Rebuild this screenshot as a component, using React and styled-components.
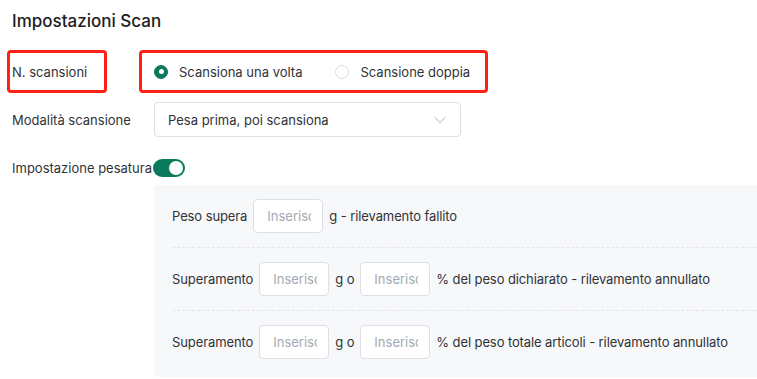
import React from "react";
import styled, { createGlobalStyle } from "styled-components";

const Global = createGlobalStyle`
  html, body { margin: 0; padding: 0; background: #fff; overflow: hidden; }
  body { font-family: Inter, "Noto Sans", sans-serif; font-size: 13px; color: #2b2f36; }
  * { box-sizing: border-box; }
`;

const Page = styled.div`
  width: 757px;
  padding: 9px 0 0 12px;
`;

const Title = styled.h2`
  margin: 0;
  font-size: 17px;
  line-height: 24px;
  font-weight: 500;
  color: #1a1c1f;
`;

const Row = styled.div`
  display: flex;
  align-items: center;
  height: ${(p) => p.$h}px;
  margin-top: ${(p) => p.$mt}px;
`;

const Label = styled.div`
  width: 142px;
  flex: none;
  display: flex;
  align-items: center;
  line-height: 18px;
  color: #2f3338;
`;

const LabelText = styled.span`
  white-space: nowrap;
`;

const Highlight = styled.div`
  display: flex;
  align-items: center;
  height: 43px;
  border: 3px solid #ff2116;
  border-radius: 4px;
  margin-left: ${(p) => p.$ml}px;
  width: ${(p) => p.$w}px;
  padding-left: ${(p) => p.$pl}px;
`;

const RadioGroup = styled.div`
  display: flex;
  align-items: center;
  gap: 33px;
`;

const RadioItem = styled.label`
  display: flex;
  align-items: center;
  gap: 11px;
  color: #2f3338;
  cursor: pointer;
`;

const RadioDot = styled.span`
  width: 14px;
  height: 14px;
  border-radius: 50%;
  flex: none;
  position: relative;
  background: ${(p) => (p.$on ? "#0b7a5c" : "#fff")};
  border: 1px solid ${(p) => (p.$on ? "#0b7a5c" : "#dcdfe5")};
  &::after {
    content: "";
    display: ${(p) => (p.$on ? "block" : "none")};
    position: absolute;
    left: 50%;
    top: 50%;
    width: 5px;
    height: 5px;
    margin: -2.5px 0 0 -2.5px;
    border-radius: 50%;
    background: #fff;
  }
`;

const Select = styled.div`
  width: 307px;
  height: 35px;
  border: 1px solid #dcdfe5;
  border-radius: 4px;
  display: flex;
  align-items: center;
  justify-content: space-between;
  padding: 0 14px 0 13px;
  color: #2f3338;
`;

const Toggle = styled.span`
  width: 32px;
  height: 18px;
  border-radius: 9px;
  background: #0b7a5c;
  flex: none;
  display: flex;
  align-items: center;
  justify-content: flex-end;
  padding: 2px;
  margin-left: -1px;
`;

const Knob = styled.span`
  width: 14px;
  height: 14px;
  border-radius: 50%;
  background: #fff;
`;

const Panel = styled.div`
  margin: 8px 0 0 142px;
  width: 620px;
  background: #f7f8fa;
  border-radius: 4px;
  padding: 0 0 4px 18px;
`;

const PanelRow = styled.div`
  display: flex;
  align-items: center;
  gap: 6px;
  padding: 14px 0;
  border-bottom: ${(p) => (p.$last ? "none" : "1px dashed #e3e5e9")};
  white-space: nowrap;
  color: #2f3338;
`;

const RowText = styled.span`
  letter-spacing: -0.1px;
`;

const NumInput = styled.input`
  width: 70px;
  height: 34px;
  border: 1px solid #dcdfe5;
  border-radius: 4px;
  background: #fff;
  padding: 0 11px 0 13px;
  font-family: inherit;
  font-size: 13px;
  color: #2f3338;
  outline: none;
  &::placeholder { color: #a4a9b1; }
`;

const Chevron = () => (
  <svg width="12" height="8" viewBox="0 0 12 8" fill="none">
    <path d="M1 1.5 L6 6.5 L11 1.5" stroke="#a9aeb6" strokeWidth="1" />
  </svg>
);

export default function App() {
  return (
    <Page>
      <Global />
      <Title>Impostazioni Scan</Title>
      <Row $h={43} $mt={17}>
        <Label>
          <Highlight $ml={-5} $w={100} $pl={2}>
            <LabelText>N. scansioni</LabelText>
          </Highlight>
        </Label>
        <Highlight $ml={-15} $w={349} $pl={12}>
          <RadioGroup>
            <RadioItem>
              <RadioDot $on />
              Scansiona una volta
            </RadioItem>
            <RadioItem>
              <RadioDot />
              Scansione doppia
            </RadioItem>
          </RadioGroup>
        </Highlight>
      </Row>
      <Row $h={35} $mt={9}>
        <Label>
          <LabelText>Modalità scansione</LabelText>
        </Label>
        <Select>
          <span>Pesa prima, poi scansiona</span>
          <Chevron />
        </Select>
      </Row>
      <Row $h={18} $mt={22}>
        <Label>
          <LabelText>Impostazione pesatura</LabelText>
        </Label>
        <Toggle>
          <Knob />
        </Toggle>
      </Row>
      <Panel>
        <PanelRow>
          <RowText>Peso supera</RowText>
          <NumInput placeholder="Inserisci" />
          <RowText>g - rilevamento fallito</RowText>
        </PanelRow>
        <PanelRow>
          <RowText>Superamento</RowText>
          <NumInput placeholder="Inserisci" />
          <RowText>g o</RowText>
          <NumInput placeholder="Inserisci" />
          <RowText>% del peso dichiarato - rilevamento annullato</RowText>
        </PanelRow>
        <PanelRow $last>
          <RowText>Superamento</RowText>
          <NumInput placeholder="Inserisci" />
          <RowText>g o</RowText>
          <NumInput placeholder="Inserisci" />
          <RowText>% del peso totale articoli - rilevamento annullato</RowText>
        </PanelRow>
      </Panel>
    </Page>
  );
}
